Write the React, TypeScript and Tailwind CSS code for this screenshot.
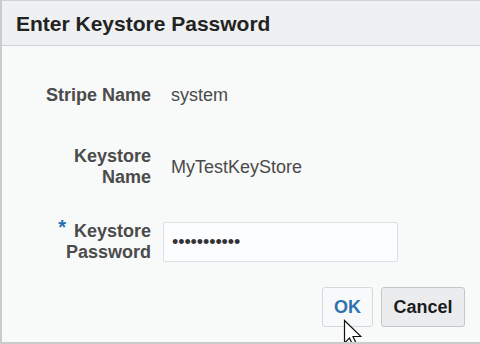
import React from "react";

export default function App() {
  return (
    <div
      className="relative w-[480px] h-[344px] overflow-hidden bg-[#f8f9f9] border-l-2 border-b-2 border-[#c9cbcd] flex flex-col"
      style={{ fontFamily: '"Liberation Sans", Arial, sans-serif' }}
    >
      <div className="border-t border-b border-[#cfd1d3] bg-[#eff0f1] pt-[11px] pb-[9px] pl-[14px]">
        <div className="text-[21px] leading-[24px] font-bold text-[#232323]">Enter Keystore Password</div>
      </div>

      <div className="flex flex-col pt-[39px]">
        <div className="flex items-center gap-3">
          <div className="w-[149px] text-right text-[18px] leading-[21px] font-bold text-[#4b4b4b]">Stripe Name</div>
          <div className="pl-2 text-[18px] leading-[21px] text-[#4a4a4a]">system</div>
        </div>

        <div className="flex items-center gap-3 mt-[40px]">
          <div className="w-[149px] text-right text-[18px] leading-[21px] font-bold text-[#4b4b4b]">
            Keystore
            <br />
            Name
          </div>
          <div className="pl-2 text-[18px] leading-[21px] text-[#4a4a4a]">MyTestKeyStore</div>
        </div>

        <div className="flex items-center gap-3 mt-[32px]">
          <div className="w-[149px] text-right text-[18px] leading-[21px] font-bold text-[#4b4b4b]">
            <span className="relative top-[-3px] text-[20px] text-[#1e6fb4] mr-[8px]">*</span>Keystore
            <br />
            Password
          </div>
          <div className="w-[235px] h-[40px] bg-[#fcfdfe] border border-[#dcdfe2] rounded-[2px] flex items-center pl-2">
            <span className="text-[18px] leading-[21px] text-[#333] tracking-[-0.1px] pt-[2px]">•••••••••••</span>
          </div>
        </div>

        <div className="flex justify-end gap-2 mt-[24px] mr-[15px]">
          <div className="w-[51px] h-[40px] rounded-[3px] border border-[#d5d8db] bg-[#f7f9fa] flex items-center justify-center text-[18px] font-bold text-[#2f73ae]">
            OK
          </div>
          <div className="w-[84px] h-[40px] rounded-[3px] border border-[#c5c8cb] bg-[#eaecee] flex items-center justify-center text-[18px] font-bold text-[#1c1c1c]">
            Cancel
          </div>
        </div>
      </div>

      <svg
        className="absolute left-[340px] top-[319px]"
        width="20"
        height="30"
        viewBox="0 0 20 30"
      >
        <path
          d="M2.5 1.5 L2.5 24 L7.5 19 L11.5 27.5 L15 26 L11 17.5 L19 17.5 Z"
          fill="#ffffff"
          stroke="#111111"
          strokeWidth="1.2"
          strokeLinejoin="miter"
        />
      </svg>
    </div>
  );
}
